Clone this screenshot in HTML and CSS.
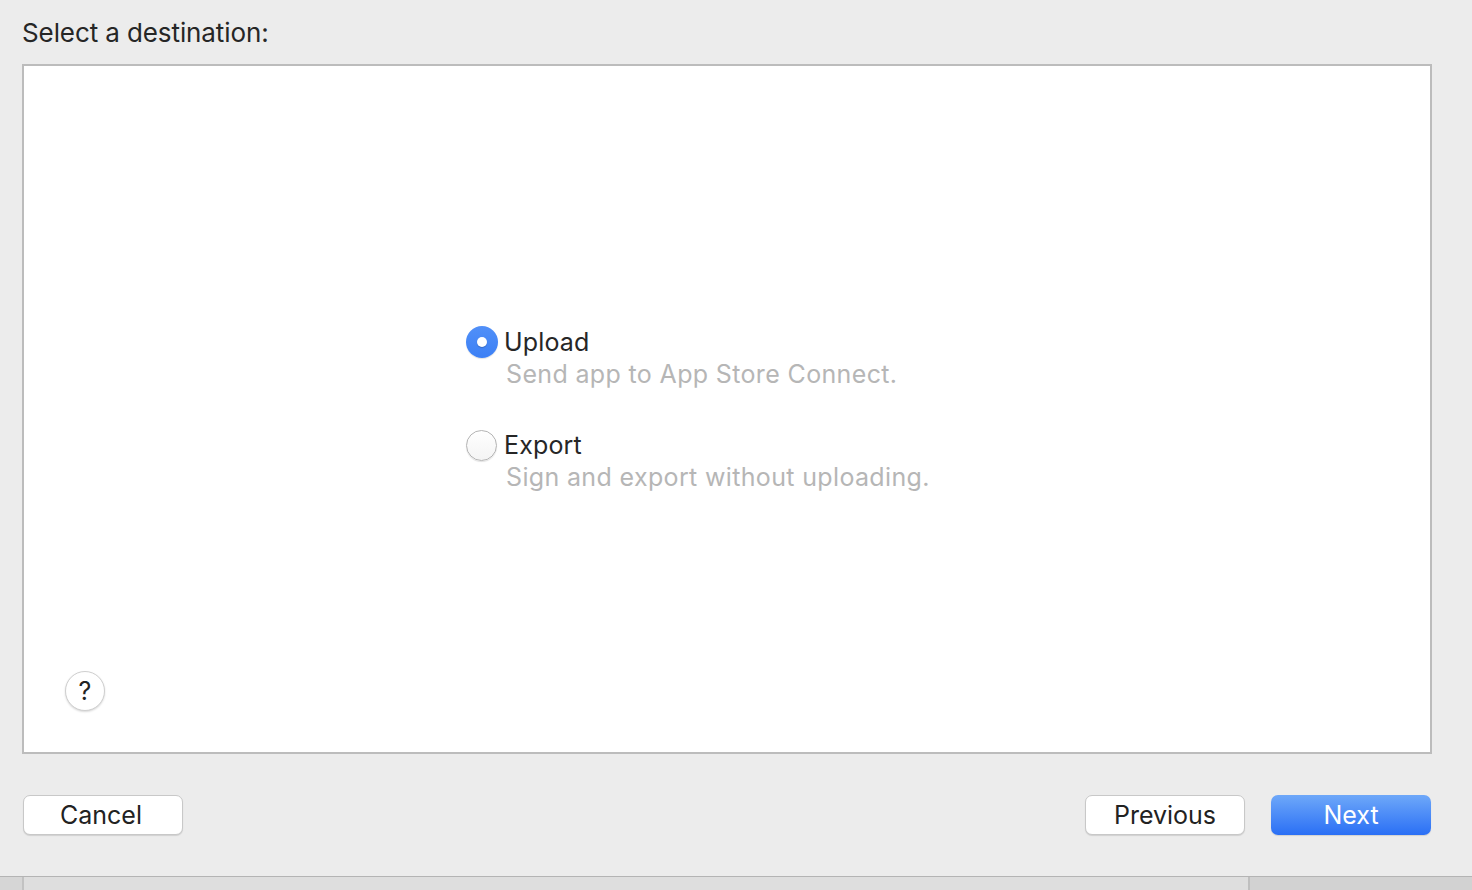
FILE: index.html
```html
<!DOCTYPE html>
<html>
<head>
<meta charset="utf-8">
<link rel="stylesheet" href="styles.css">
</head>
<body>
<div class="sheet">
  <div class="title">Select a destination:</div>
  <div class="panel">
    <div class="spacer"></div>
    <div class="options">
      <div class="option">
        <div class="opt-row"><span class="radio radio-on"><span class="dot"></span></span><span class="label">Upload</span></div>
        <div class="desc">Send app to App Store Connect.</div>
      </div>
      <div class="option">
        <div class="opt-row"><span class="radio"></span><span class="label">Export</span></div>
        <div class="desc">Sign and export without uploading.</div>
      </div>
    </div>
    <div class="help-row"><span class="help">?</span></div>
  </div>
  <div class="buttons">
    <button class="btn btn-cancel">Cancel</button>
    <div class="right">
      <button class="btn">Previous</button>
      <button class="btn btn-primary">Next</button>
    </div>
  </div>
</div>
<div class="under">
  <div class="under-left"></div>
  <div class="under-mid"></div>
  <div class="under-right"></div>
</div>
</body>
</html>
```
FILE: styles.css
```css
html, body {
  margin: 0;
  padding: 0;
  height: 890px;
  overflow: hidden;
  background: #d4d4d4;
  font-family: Inter, "Helvetica Neue", "Liberation Sans", sans-serif;
  color: #262626;
}
.sheet {
  background: #ececec;
  height: 877px;
  border-bottom: 1px solid #b4b4b4;
  box-sizing: border-box;
  padding: 17px 40px 0 22px;
  display: flex;
  flex-direction: column;
}
.title {
  font-size: 26px;
  line-height: 32px;
  height: 47px;
  letter-spacing: -0.1px;
}
.panel {
  height: 690px;
  box-sizing: border-box;
  border: 2px solid #bcbcbc;
  background: #fff;
  display: grid;
  grid-template-rows: 1fr auto 1fr;
}
.options {
  justify-self: center;
  margin-right: 60px;
  display: flex;
  flex-direction: column;
  gap: 38px;
  width: 462px;
  white-space: nowrap;
}
.opt-row {
  display: flex;
  align-items: center;
  height: 34px;
}
.radio {
  width: 31px;
  height: 31px;
  border-radius: 50%;
  box-sizing: border-box;
  border: 1px solid #b4b4b4;
  background: linear-gradient(#ffffff, #f4f4f4);
  box-shadow: 0 1px 1px rgba(0,0,0,0.12);
  margin-right: 7px;
  display: flex;
  align-items: center;
  justify-content: center;
  flex: none;
}
.radio-on {
  width: 32px;
  height: 32px;
  margin-right: 6px;
  border: none;
  background: linear-gradient(#5190f8, #3c80f5);
}
.dot {
  width: 10px;
  height: 10px;
  border-radius: 50%;
  background: #fff;
  box-shadow: 0 1px 1px rgba(0,0,0,0.2);
}
.label {
  font-size: 25px;
  letter-spacing: 0.15px;
}
.desc {
  font-size: 25px;
  color: #b6b6b6;
  margin-left: 40px;
  margin-top: -1px;
  line-height: 32px;
  letter-spacing: 0.35px;
}
.help-row {
  display: flex;
  align-items: flex-end;
  padding: 0 0 41px 41px;
}
.help {
  width: 40px;
  height: 40px;
  border-radius: 50%;
  box-sizing: border-box;
  border: 1px solid #cfcfcf;
  box-shadow: 0 1px 2px rgba(0,0,0,0.15);
  background: #fff;
  display: flex;
  align-items: center;
  justify-content: center;
  font-size: 25px;
  color: #222;
}
.buttons {
  display: flex;
  justify-content: space-between;
  margin-top: 41px;
  margin-right: 1px;
}
.right {
  display: flex;
  gap: 26px;
}
.btn {
  width: 160px;
  height: 40px;
  border-radius: 7px;
  border: 1px solid #c8c8c8;
  background: #fff;
  box-shadow: 0 1px 1px rgba(0,0,0,0.12);
  font-family: Inter, "Helvetica Neue", "Liberation Sans", sans-serif;
  font-size: 25px;
  color: #222;
  padding: 0;
}
.btn-cancel {
  margin-left: 1px;
  padding-right: 4px;
}
.btn-primary {
  color: #fff;
  border: none;
  background: linear-gradient(#6ea8f9, #2a6ff5);
}
.under {
  display: flex;
  height: 13px;
}
.under-left {
  width: 22px;
  background: #d6d6d6;
  border-right: 2px solid #c2c2c2;
}
.under-mid {
  width: 1224px;
  background: #dedede;
  border-right: 2px solid #bfbfbf;
}
.under-right {
  flex: 1;
  background: #d2d2d2;
}
```
